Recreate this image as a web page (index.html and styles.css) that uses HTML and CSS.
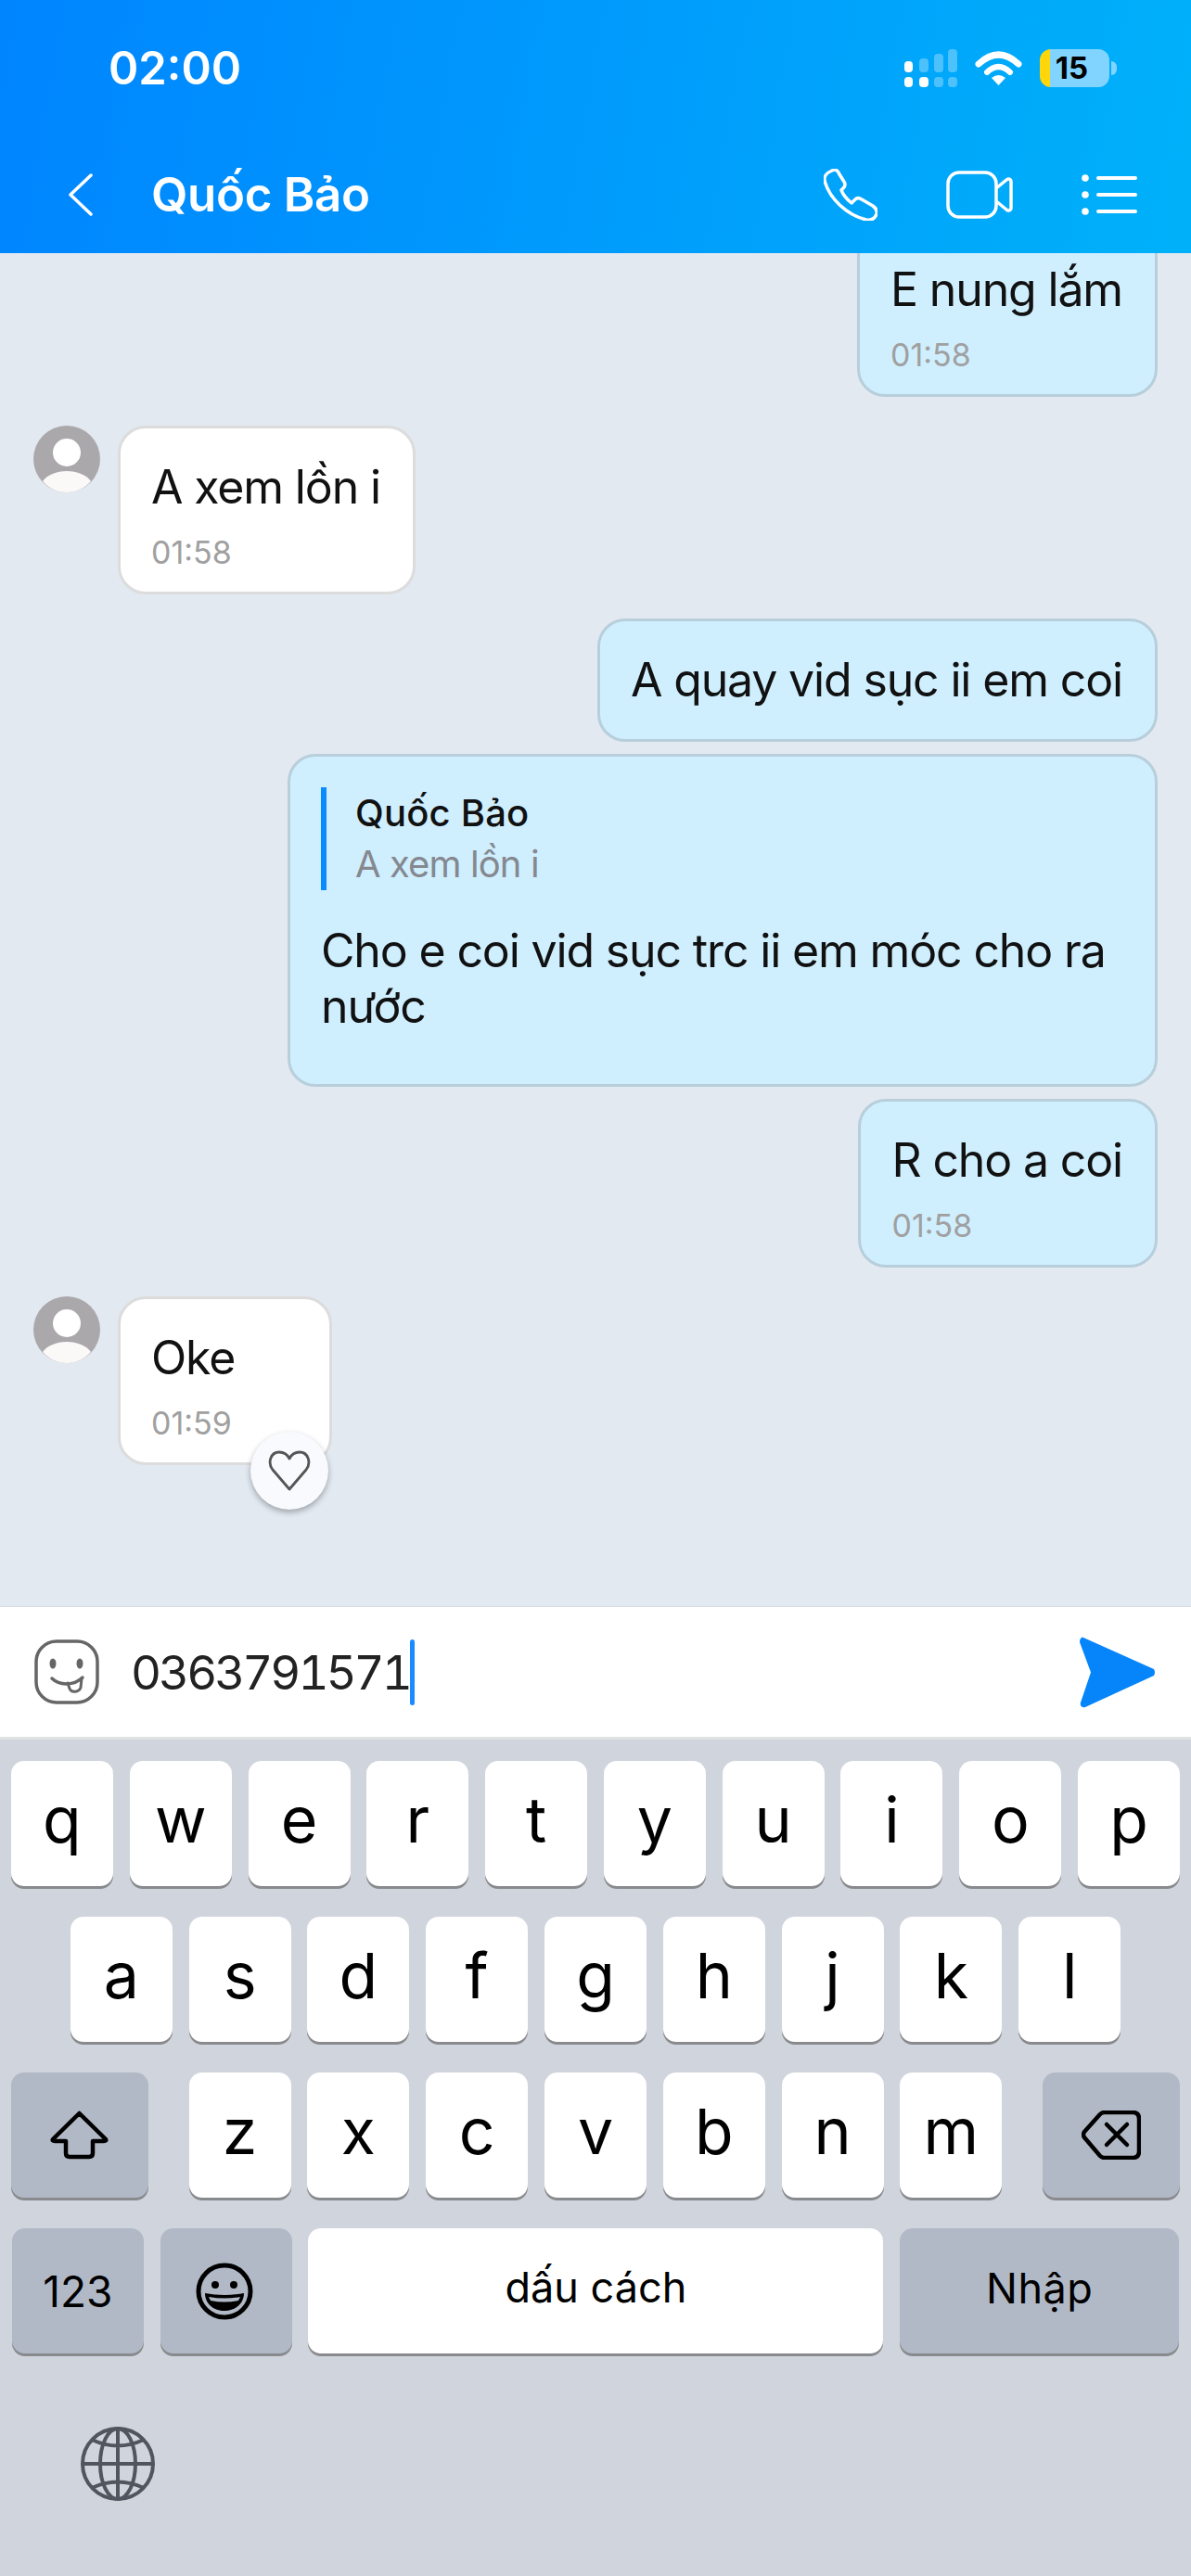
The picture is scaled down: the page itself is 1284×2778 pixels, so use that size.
FILE: index.html
```html
<!doctype html>
<html lang="vi">
  <head>
    <meta charset="UTF-8" />
    <title>Quốc Bảo</title>
    <link rel="stylesheet" href="styles.css">
  </head>
  <body>
    <header class="top">
      <div class="status">
        <span class="clock">02:00</span>
        <div class="status-icons">
          <svg width="58" height="41" viewBox="0 0 58 41">
            <rect x="1" y="13" width="9" height="12" rx="4" fill="#fff"/>
            <rect x="1" y="30" width="9" height="11" rx="4" fill="#fff"/>
            <rect x="17" y="10" width="10" height="15" rx="4" fill="#fff" opacity=".3"/>
            <rect x="17" y="30" width="10" height="11" rx="4" fill="#fff"/>
            <rect x="33" y="5" width="10" height="20" rx="4" fill="#fff" opacity=".3"/>
            <rect x="33" y="30" width="10" height="11" rx="4" fill="#fff" opacity=".3"/>
            <rect x="48" y="0" width="10" height="25" rx="4" fill="#fff" opacity=".3"/>
            <rect x="48" y="30" width="10" height="11" rx="4" fill="#fff" opacity=".3"/>
          </svg>
          <svg width="51" height="38" viewBox="0 0 51 38">
            <path d="M4 15Q25.500-5 47 15" fill="none" stroke="#fff" stroke-width="7" stroke-linecap="round"/>
            <path d="M13 24Q25.500 12 38 24" fill="none" stroke="#fff" stroke-width="6" stroke-linecap="round"/>
            <path d="M18 30Q25.500 24 33 30L25.500 38Z" fill="#fff"/>
          </svg>
          <div class="battery">15</div>
        </div>
      </div>
      <nav class="nav">
        <svg class="back" width="27" height="46" viewBox="0 0 27 46">
          <path d="M25 2L3 23L25 44" fill="none" stroke="#fff" stroke-width="3.500" stroke-linecap="round" stroke-linejoin="round"/>
        </svg>
        <span class="title">Quốc Bảo</span>
        <div class="nav-icons">
          <svg width="58" height="56" viewBox="0 0 58 56">
            <path d="M9 2C12 0 15 1 17 6L22 14C24 17 23 19 21 21L19 23C21 28 25 33 30 37L34 33C36 31 38 31 41 33L53 40C57 43 58 46 57 49C55 54 51 56 46 55C25 50 6 32 1 13C0 8 4 4 9 2Z" fill="none" stroke="#fff" stroke-width="3.500" stroke-linejoin="round"/>
          </svg>
          <svg width="72" height="52" viewBox="0 0 72 52">
            <rect x="2" y="2" width="52" height="48" rx="12" fill="none" stroke="#fff" stroke-width="3.500"/>
            <path d="M54 19L65 10C67 8 70 9 70 12V40C70 43 67 44 65 42L54 33" fill="none" stroke="#fff" stroke-width="3.500" stroke-linejoin="round"/>
          </svg>
          <svg width="60" height="44" viewBox="0 0 60 44">
            <circle cx="4" cy="4" r="3.800" fill="#fff"/>
            <circle cx="4" cy="22" r="3.800" fill="#fff"/>
            <circle cx="4" cy="40" r="3.800" fill="#fff"/>
            <path d="M18 4H58M18 22H58M18 40H58" stroke="#fff" stroke-width="4" stroke-linecap="round"/>
          </svg>
        </div>
      </nav>
    </header>

    <main class="chat">
      <div class="row sent">
        <div class="bubble me">
          <div class="text">E nung lắm</div>
          <div class="time">01:58</div>
        </div>
      </div>

      <div class="row got gap-big">
        <svg class="avatar" width="72" height="72" viewBox="0 0 72 72">
          <circle cx="36" cy="36" r="36" fill="#aba8ac"/>
          <circle cx="36" cy="29" r="15" fill="#fff"/>
          <path d="M10 60C15 53 25 49 36 49C47 49 57 53 62 60C55 68 46 72 36 72C26 72 17 68 10 60Z" fill="#fbf9f8"/>
        </svg>
        <div class="bubble them">
          <div class="text">A xem lồn i</div>
          <div class="time">01:58</div>
        </div>
      </div>

      <div class="row sent gap-mid">
        <div class="bubble me short">
          <div class="text">A quay vid sục ii em coi</div>
        </div>
      </div>

      <div class="row sent gap-small">
        <div class="bubble me reply">
          <div class="quote">
            <div class="quote-name">Quốc Bảo</div>
            <div class="quote-text">A xem lồn i</div>
          </div>
          <div class="text">Cho e coi vid sục trc ii em móc cho ra nước</div>
        </div>
      </div>

      <div class="row sent gap-small">
        <div class="bubble me">
          <div class="text">R cho a coi</div>
          <div class="time">01:58</div>
        </div>
      </div>

      <div class="row got gap-big">
        <svg class="avatar" width="72" height="72" viewBox="0 0 72 72">
          <circle cx="36" cy="36" r="36" fill="#aba8ac"/>
          <circle cx="36" cy="29" r="15" fill="#fff"/>
          <path d="M10 60C15 53 25 49 36 49C47 49 57 53 62 60C55 68 46 72 36 72C26 72 17 68 10 60Z" fill="#fbf9f8"/>
        </svg>
        <div class="bubble them last">
          <div class="text">Oke</div>
          <div class="time">01:59</div>
          <div class="like">
            <svg width="46" height="44" viewBox="0 0 46 44">
              <path d="M23 42L5 21C-1 13 3 2 12 2C17 2 21 5 23 9C25 5 29 2 34 2C43 2 47 13 41 21Z" fill="none" stroke="#555" stroke-width="2.800" stroke-linejoin="round"/>
            </svg>
          </div>
        </div>
      </div>
    </main>

    <div class="composer">
      <svg width="70" height="70" viewBox="0 0 70 70">
        <rect x="2" y="2" width="66" height="66" rx="22" fill="none" stroke="#666" stroke-width="3.500"/>
        <ellipse cx="20" cy="26" rx="3.500" ry="5.500" fill="#666"/>
        <ellipse cx="49" cy="26" rx="3.500" ry="5.500" fill="#666"/>
        <path d="M19 42C27 50 43 50 52 41" fill="none" stroke="#666" stroke-width="3.500" stroke-linecap="round"/>
        <path d="M36 47L38 53C40 58 48 57 50 52L51 42" fill="none" stroke="#666" stroke-width="3" stroke-linecap="round"/>
      </svg>
      <div class="typed">0363791571</div>
      <div class="caret"></div>
      <svg class="send" width="82" height="77" viewBox="0 0 82 77">
        <path d="M4 1L80 35Q82 38.500 80 42L6 76C2 77 0 74 1 71L12 38.500L0 6C0 2 2 0 4 1Z" fill="#0685fb"/>
      </svg>
    </div>

    <section class="keyboard">
      <div class="keys">
        <div class="key">q</div><div class="key">w</div><div class="key">e</div><div class="key">r</div><div class="key">t</div>
        <div class="key">y</div><div class="key">u</div><div class="key">i</div><div class="key">o</div><div class="key">p</div>
      </div>
      <div class="keys">
        <div class="key">a</div><div class="key">s</div><div class="key">d</div><div class="key">f</div><div class="key">g</div>
        <div class="key">h</div><div class="key">j</div><div class="key">k</div><div class="key">l</div>
      </div>
      <div class="keys">
        <div class="key fn wide shift">
          <svg width="63" height="53" viewBox="0 0 63 53">
            <path d="M31.500 3L60 31Q61 33 58 33H46V46Q46 50 42 50H21Q17 50 17 46V33H5Q2 33 3 31Z" fill="none" stroke="#000" stroke-width="4.500" stroke-linejoin="round"/>
          </svg>
        </div>
        <div class="key">z</div><div class="key">x</div><div class="key">c</div><div class="key">v</div>
        <div class="key">b</div><div class="key">n</div><div class="key">m</div>
        <div class="key fn wide del">
          <svg width="64" height="53" viewBox="0 0 64 53">
            <path d="M25 2H55Q62 2 62 9V44Q62 51 55 51H25Q22 51 20 49L3 29Q1 26 3 23L20 4Q22 2 25 2Z" fill="none" stroke="#000" stroke-width="4.500" stroke-linejoin="round"/>
            <path d="M27 15L49 37M49 15L27 37" fill="none" stroke="#000" stroke-width="4.500" stroke-linecap="round"/>
          </svg>
        </div>
      </div>
      <div class="keys">
        <div class="key fn small num">123</div>
        <div class="key fn small emoji">
          <svg width="62" height="62" viewBox="0 0 62 62">
            <circle cx="31" cy="31" r="28" fill="none" stroke="#000" stroke-width="5"/>
            <circle cx="21" cy="24" r="4" fill="#000"/>
            <circle cx="41" cy="24" r="4" fill="#000"/>
            <path d="M10 33Q31 37 52 33C52 45 42 52 31 52C20 52 10 45 10 33Z" fill="#000"/>
            <path d="M14 37Q31 40 48 37L46 41Q31 44 16 41Z" fill="#b2b9c6"/>
          </svg>
        </div>
        <div class="key space">dấu cách</div>
        <div class="key fn enter">Nhập</div>
      </div>
      <div class="globe">
        <svg width="80" height="80" viewBox="0 0 80 80">
          <g fill="none" stroke="#50555f" stroke-width="4">
            <circle cx="40" cy="40" r="38"/>
            <ellipse cx="40" cy="40" rx="19" ry="38"/>
            <path d="M40 2V78M2 40H78M12 14Q40 27 68 14M12 66Q40 53 68 66"/>
          </g>
        </svg>
      </div>
    </section>
  </body>
</html>
```

FILE: styles.css
```css
* {
  box-sizing: border-box;
}
body {
  margin: 0;
  width: 1284px;
  height: 2778px;
  overflow: hidden;
  font-family: Inter, "Noto Sans", sans-serif;
  background: #e2e9f1;
  color: #111;
}

/* header */
.top {
  height: 273px;
  background: linear-gradient(100deg, #0085ff, #00b1f9);
  color: white;
}
.status {
  height: 146px;
  padding: 0 80px 0 117px;
  display: flex;
  align-items: center;
  justify-content: space-between;
}
.clock {
  font-size: 49px;
  font-weight: 600;
}
.status-icons {
  display: flex;
  align-items: center;
  gap: 19px;
}
.battery {
  position: relative;
  width: 75px;
  height: 41px;
  margin-right: 8px;
  border-radius: 12px;
  background: linear-gradient(90deg, #ffd60a 11px, #80d4ff 11px);
  color: black;
  font-size: 33px;
  font-weight: 700;
  line-height: 41px;
  text-align: center;
  padding-right: 6px;
}
.battery::after {
  content: "";
  position: absolute;
  right: -8px;
  top: 13px;
  width: 6px;
  height: 15px;
  border-radius: 0 6px 6px 0;
  background: #80d4ff;
}
.nav {
  height: 127px;
  padding: 0 58px 0 73px;
  display: flex;
  align-items: center;
}
.title {
  margin-left: 63px;
  font-size: 51px;
  font-weight: 600;
  letter-spacing: -0.3px;
}
.nav-icons {
  margin-left: auto;
  display: flex;
  align-items: center;
  gap: 74px;
}

/* messages */
.chat {
  height: 1459px;
  overflow: hidden;
  padding: 0 36px 152px;
  display: flex;
  flex-direction: column;
  justify-content: flex-end;
}
.row {
  display: flex;
  align-items: flex-start;
  gap: 19px;
  flex-shrink: 0;
}
.sent {
  justify-content: flex-end;
}
.gap-big {
  margin-top: 31px;
}
.gap-mid {
  margin-top: 26px;
}
.gap-small {
  margin-top: 13px;
}
.bubble {
  position: relative;
  padding: 33px 35px 22px 33px;
  border-radius: 30px;
  border: 3px solid #dcdcdc;
  background: white;
}
.bubble.me {
  background: #cfefff;
  border-color: #b8cfdb;
}
.bubble.short {
  padding-bottom: 34px;
}
.bubble.reply {
  width: 938px;
  padding-bottom: 54px;
}
.text {
  font-size: 50px;
  line-height: 60px;
  letter-spacing: -1.15px;
}
.time {
  margin-top: 21px;
  font-size: 34px;
  line-height: 40px;
  color: #a0a0a0;
}
.quote {
  height: 111px;
  margin-bottom: 35px;
  padding-left: 31px;
  border-left: 6px solid #0a8cff;
  font-size: 40px;
  line-height: 55px;
}
.quote-name {
  font-weight: 500;
  letter-spacing: 0.2px;
}
.quote-text {
  color: #85888f;
  letter-spacing: -0.9px;
}
.bubble.them.last {
  width: 231px;
}
.like {
  position: absolute;
  right: 1px;
  bottom: -51px;
  width: 84px;
  height: 84px;
  border-radius: 50%;
  background: #f8fafd;
  box-shadow: 0 3px 6px rgba(0, 0, 0, 0.3);
  display: flex;
  align-items: center;
  justify-content: center;
}

/* input */
.composer {
  height: 141px;
  border-top: 1px solid #d8dde3;
  background: white;
  padding: 0 38px 0 37px;
  display: flex;
  align-items: center;
}
.typed {
  margin-left: 34px;
  font-size: 51px;
  font-variant-numeric: tabular-nums;
  letter-spacing: -3px;
  color: #222;
}
.caret {
  width: 5px;
  height: 71px;
  border-radius: 3px;
  background: #1a8cff;
}
.send {
  margin-left: auto;
}

/* keyboard */
.keyboard {
  height: 905px;
  border-top: 3px solid #e0e1e3;
  background: #d0d4dc;
  padding-top: 23px;
}
.keys {
  display: flex;
  justify-content: center;
  gap: 17.800px;
  margin-bottom: 33px;
}
.key {
  width: 110px;
  height: 135px;
  padding-bottom: 10px;
  border-radius: 14px;
  background: white;
  box-shadow: 0 3px 0 #898a8d;
  font-size: 68px;
  color: black;
  display: flex;
  align-items: center;
  justify-content: center;
}
.key.fn {
  background: #b2b9c6;
  padding-bottom: 0;
}
.key.wide {
  width: 148px;
}
.key.shift {
  margin-right: 26px;
}
.key.del {
  margin-left: 26px;
}
.key.small {
  width: 142px;
}
.key.num {
  font-size: 46px;
}
.key.emoji {
  padding-right: 4px;
}
.key.space {
  width: 620px;
  font-size: 45px;
  padding-bottom: 8px;
}
.key.enter {
  width: 301px;
  font-size: 45px;
  letter-spacing: 0.5px;
  padding-bottom: 6px;
}
.globe {
  margin-top: 47px;
  padding-left: 87px;
  padding-top: 32px;
}
```
